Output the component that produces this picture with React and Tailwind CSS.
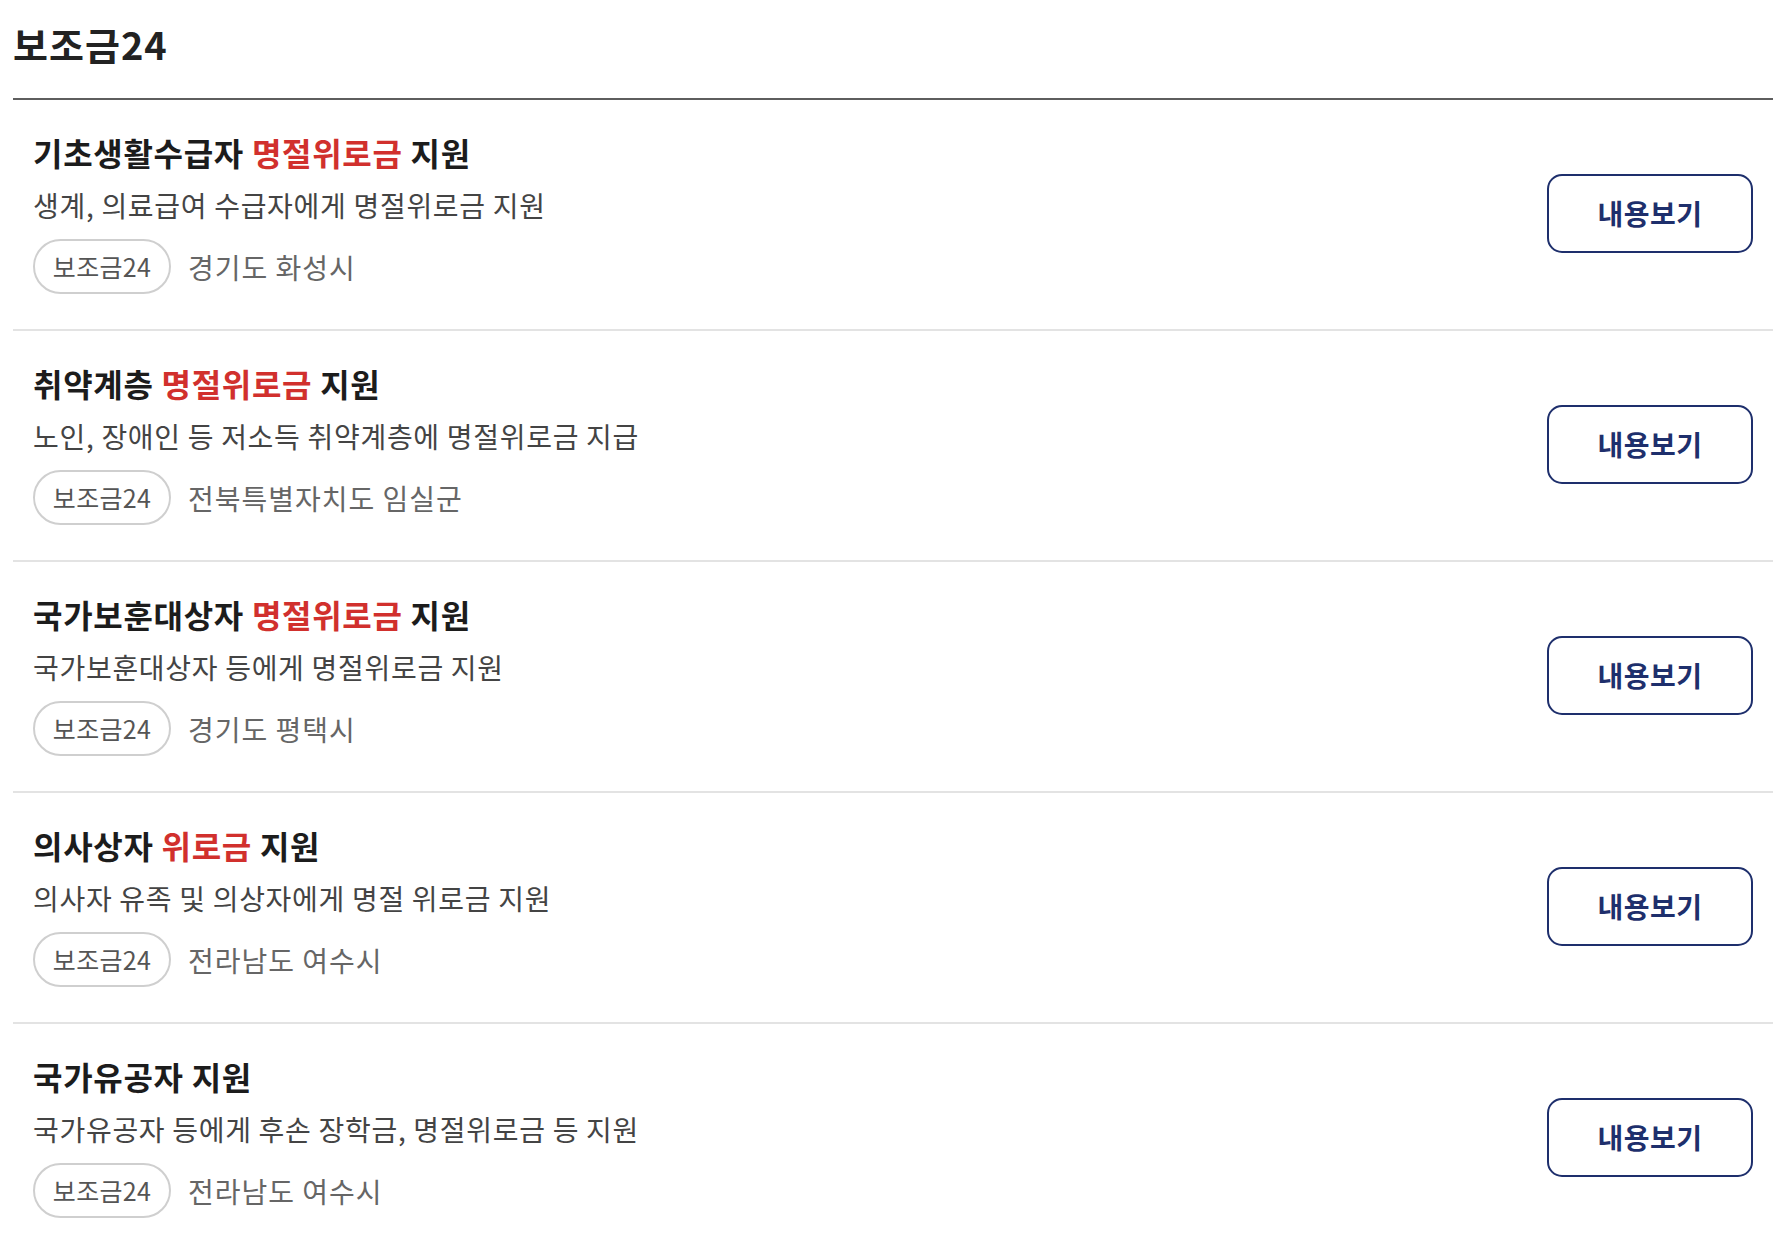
import React from "react";

const items = [
  {
    pre: "기초생활수급자 ",
    red: "명절위로금",
    post: " 지원",
    desc: "생계, 의료급여 수급자에게 명절위로금 지원",
    loc: "경기도 화성시",
  },
  {
    pre: "취약계층 ",
    red: "명절위로금",
    post: " 지원",
    desc: "노인, 장애인 등 저소득 취약계층에 명절위로금 지급",
    loc: "전북특별자치도 임실군",
  },
  {
    pre: "국가보훈대상자 ",
    red: "명절위로금",
    post: " 지원",
    desc: "국가보훈대상자 등에게 명절위로금 지원",
    loc: "경기도 평택시",
  },
  {
    pre: "의사상자 ",
    red: "위로금",
    post: " 지원",
    desc: "의사자 유족 및 의상자에게 명절 위로금 지원",
    loc: "전라남도 여수시",
  },
  {
    pre: "국가유공자 지원",
    red: "",
    post: "",
    desc: "국가유공자 등에게 후손 장학금, 명절위로금 등 지원",
    loc: "전라남도 여수시",
  },
];

export default function App() {
  return (
    <div
      className="w-full bg-white px-[13px] text-[#222]"
      style={{ fontFamily: '"Noto Sans CJK KR", "Noto Sans", sans-serif' }}
    >
      <h1 className="pt-[20px] pb-[30px] text-[38px] font-bold leading-[48px] tracking-[1px] text-[#222]">
        보조금24
      </h1>
      <div className="border-t-2 border-[#5e5e5e]">
        {items.map((it, i) => (
          <div
            key={i}
            className="flex items-center justify-between border-b-2 border-[#e3e3e3] px-[20px] pt-[32px] pb-[35px]"
          >
            <div className="flex flex-col">
              <div className="text-[32px] font-bold leading-[40px] tracking-[0.7px] text-[#1c1c1c]">
                {it.pre}
                {it.red && <span className="text-[#d1302d]">{it.red}</span>}
                {it.post}
              </div>
              <div className="mt-[15px] text-[28px] leading-[36px] tracking-[0.7px] text-[#444]">
                {it.desc}
              </div>
              <div className="mt-[16px] flex items-center gap-[17px]">
                <span className="flex h-[55px] w-[138px] items-center justify-center rounded-full border-2 border-[#cfcfcf] text-[25px] tracking-[0.3px] text-[#555]">
                  보조금24
                </span>
                <span className="text-[28px] tracking-[1px] text-[#666]">{it.loc}</span>
              </div>
            </div>
            <button className="flex h-[79px] w-[206px] items-center justify-center rounded-[15px] border-2 border-[#1e2f6c] text-[28px] font-semibold tracking-[0.5px] text-[#1e2f6c]">
              내용보기
            </button>
          </div>
        ))}
      </div>
    </div>
  );
}
